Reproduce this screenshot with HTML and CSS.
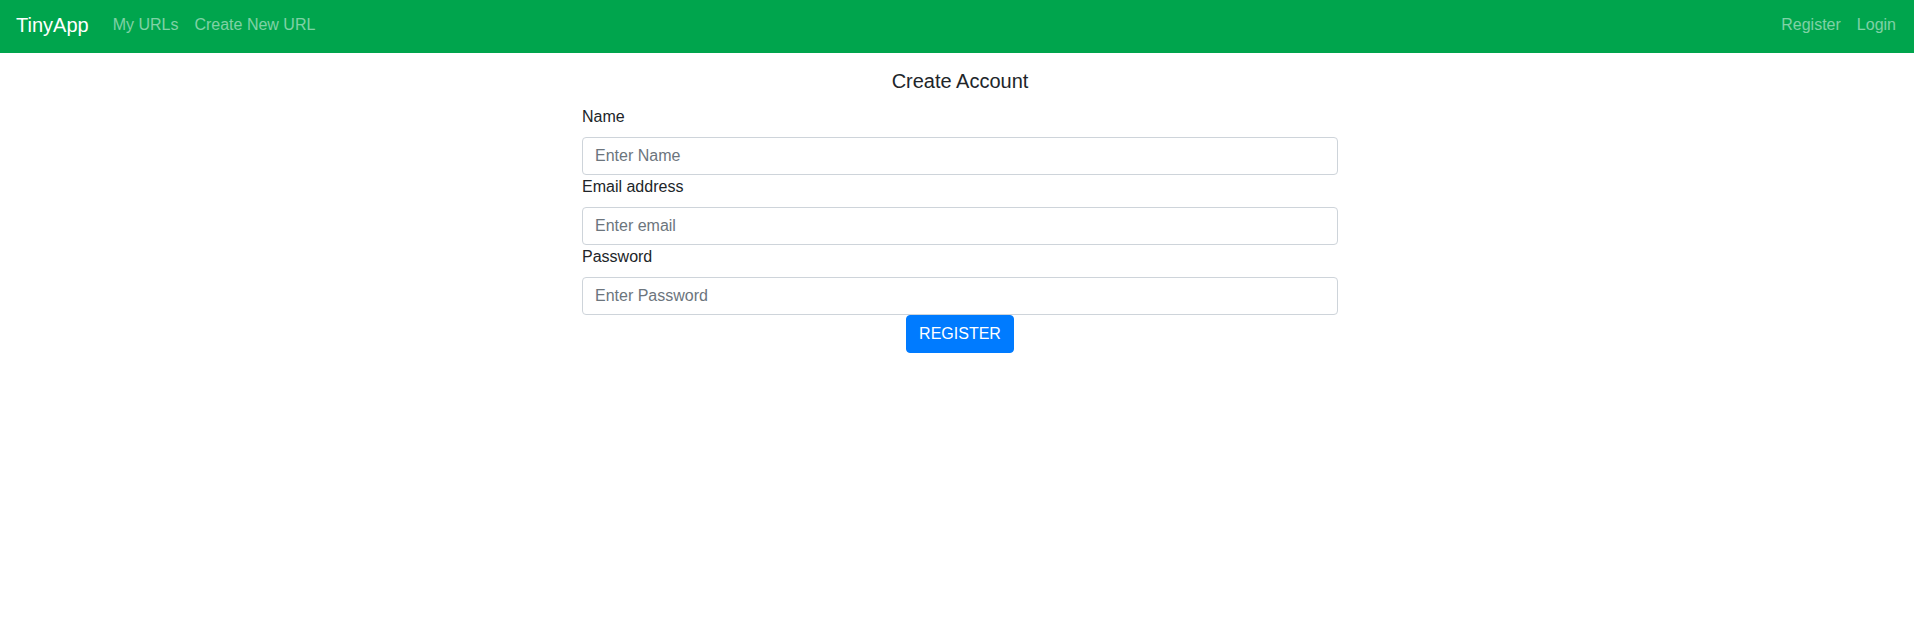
FILE: index.html
```html
<!DOCTYPE html>
<html lang="en">
<head>
<meta charset="utf-8">
<title>TinyApp</title>
<link rel="stylesheet" href="styles.css">
</head>
<body>
<nav class="navbar">
  <a class="brand" href="#">TinyApp</a>
  <div class="nav-left">
    <a class="nav-link" href="#">My URLs</a>
    <a class="nav-link" href="#">Create New URL</a>
  </div>
  <div class="nav-right">
    <a class="nav-link" href="#">Register</a>
    <a class="nav-link" href="#">Login</a>
  </div>
</nav>
<main class="main">
  <form class="form">
    <h5 class="title">Create Account</h5>
    <label class="label" for="name">Name</label>
    <input class="input" id="name" type="text" placeholder="Enter Name">
    <label class="label" for="email">Email address</label>
    <input class="input" id="email" type="email" placeholder="Enter email">
    <label class="label" for="password">Password</label>
    <input class="input" id="password" type="password" placeholder="Enter Password">
    <div class="actions">
      <button class="btn" type="button">REGISTER</button>
    </div>
  </form>
</main>
</body>
</html>
```

FILE: styles.css
```css
* { box-sizing: border-box; }
html, body { margin: 0; padding: 0; }
body {
  font-family: "Liberation Sans", Arial, sans-serif;
  font-size: 16px;
  line-height: 1.5;
  color: #212529;
  background: #fff;
}
a { text-decoration: none; }

.navbar {
  display: flex;
  align-items: center;
  height: 53px;
  padding: 0 10px 0 16px;
  background: #00a54d;
}
.brand {
  font-size: 20px;
  line-height: 30px;
  color: #fff;
  margin-right: 16px;
  margin-top: -3px;
}
.nav-left, .nav-right {
  display: flex;
  margin-top: -3px;
}
.nav-right { margin-left: auto; }
.nav-link {
  color: rgba(255, 255, 255, 0.5);
  padding: 0 8px;
  line-height: 24px;
}

.main {
  display: flex;
  justify-content: center;
  padding-left: 6px;
}
.form {
  width: 756px;
  display: flex;
  flex-direction: column;
}
.title {
  margin: 16px 0 12px;
  font-size: 20px;
  font-weight: 400;
  line-height: 24px;
  text-align: center;
}
.label {
  display: block;
  line-height: 24px;
  margin-bottom: 8px;
}
.input {
  display: block;
  width: 100%;
  height: 38px;
  padding: 6px 12px;
  font-family: inherit;
  font-size: 16px;
  color: #495057;
  border: 1px solid #ced4da;
  border-radius: 4px;
  background: #fff;
}
.input::placeholder { color: #6c757d; opacity: 1; }
.actions {
  display: flex;
  justify-content: center;
}
.btn {
  font-family: inherit;
  font-size: 16px;
  line-height: 24px;
  padding: 6px 12px;
  color: #fff;
  background: #007bff;
  border: 1px solid #007bff;
  border-radius: 4px;
}
```
